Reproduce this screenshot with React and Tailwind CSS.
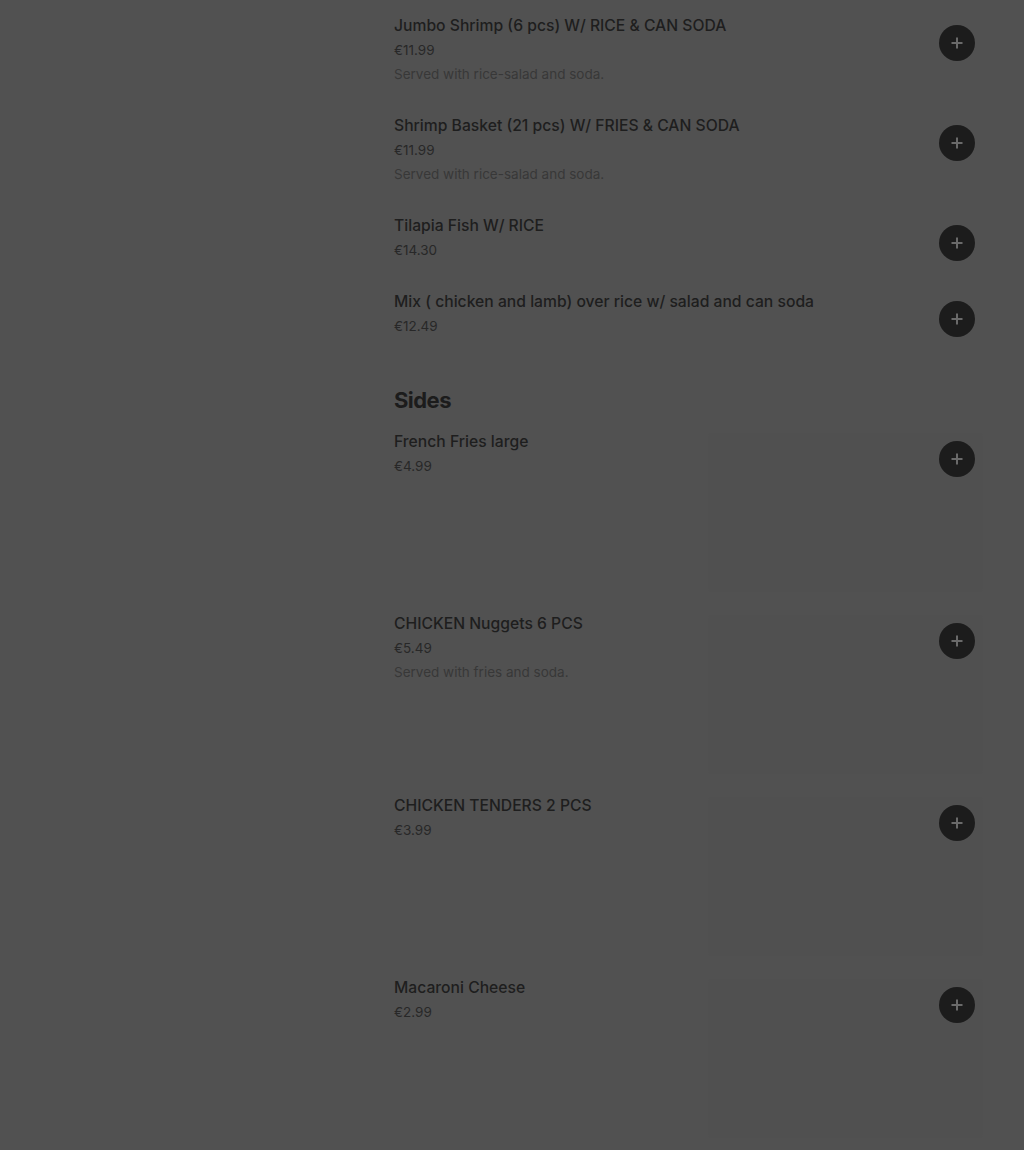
const meals = [
  { name: "Jumbo Shrimp (6 pcs) W/ RICE & CAN SODA", price: "€11.99", desc: "Served with rice-salad and soda." },
  { name: "Shrimp Basket (21 pcs) W/ FRIES & CAN SODA", price: "€11.99", desc: "Served with rice-salad and soda." },
  { name: "Tilapia Fish W/ RICE", price: "€14.30" },
  { name: "Mix ( chicken and lamb) over rice w/ salad and can soda", price: "€12.49" },
];

const sides = [
  { name: "French Fries large", price: "€4.99" },
  { name: "CHICKEN Nuggets 6 PCS", price: "€5.49", desc: "Served with fries and soda." },
  { name: "CHICKEN TENDERS 2 PCS", price: "€3.99" },
  { name: "Macaroni Cheese", price: "€2.99" },
];

function AddButton() {
  return (
    <button className="w-9 h-9 rounded-full bg-[#1c1c1c] flex items-center justify-center">
      <svg width="14" height="14" viewBox="0 0 14 14">
        <path d="M7 1.5v11M1.5 7h11" stroke="#6a6a6a" strokeWidth="2" />
      </svg>
    </button>
  );
}

function ItemText({ item }) {
  return (
    <div className="flex flex-col">
      <div className="text-[15.7px] leading-6 font-medium text-[#1e1e1e]">{item.name}</div>
      <div className="text-[13.5px] leading-6 text-[#282828]">{item.price}</div>
      {item.desc && <div className="text-[13.5px] leading-6 text-[#383838]">{item.desc}</div>}
    </div>
  );
}

function Item({ item }) {
  return (
    <div className="flex justify-between pb-[28px]">
      <ItemText item={item} />
      <div className="pt-[11px] pr-2">
        <AddButton />
      </div>
    </div>
  );
}

function ImageItem({ item }) {
  return (
    <div className="flex justify-between pb-[20px]">
      <ItemText item={item} />
      <div className="relative mt-[3px] w-[275px] h-[159px] rounded-sm bg-[#4f4f4f]/40">
        <div className="absolute top-2 right-2">
          <AddButton />
        </div>
      </div>
    </div>
  );
}

export default function App() {
  return (
    <div className="min-h-[1150px] bg-[#515151] overflow-hidden" style={{ fontFamily: "Inter, 'Liberation Sans', sans-serif" }}>
      <div className="ml-[394px] w-[589px] pt-[14px]">
        {meals.map((m) => (
          <Item key={m.name} item={m} />
        ))}
        <h2 className="mt-[20px] mb-[16px] text-[22px] leading-7 font-bold text-[#1c1c1c] tracking-tight">Sides</h2>
        {sides.map((s) => (
          <ImageItem key={s.name} item={s} />
        ))}
      </div>
    </div>
  );
}
